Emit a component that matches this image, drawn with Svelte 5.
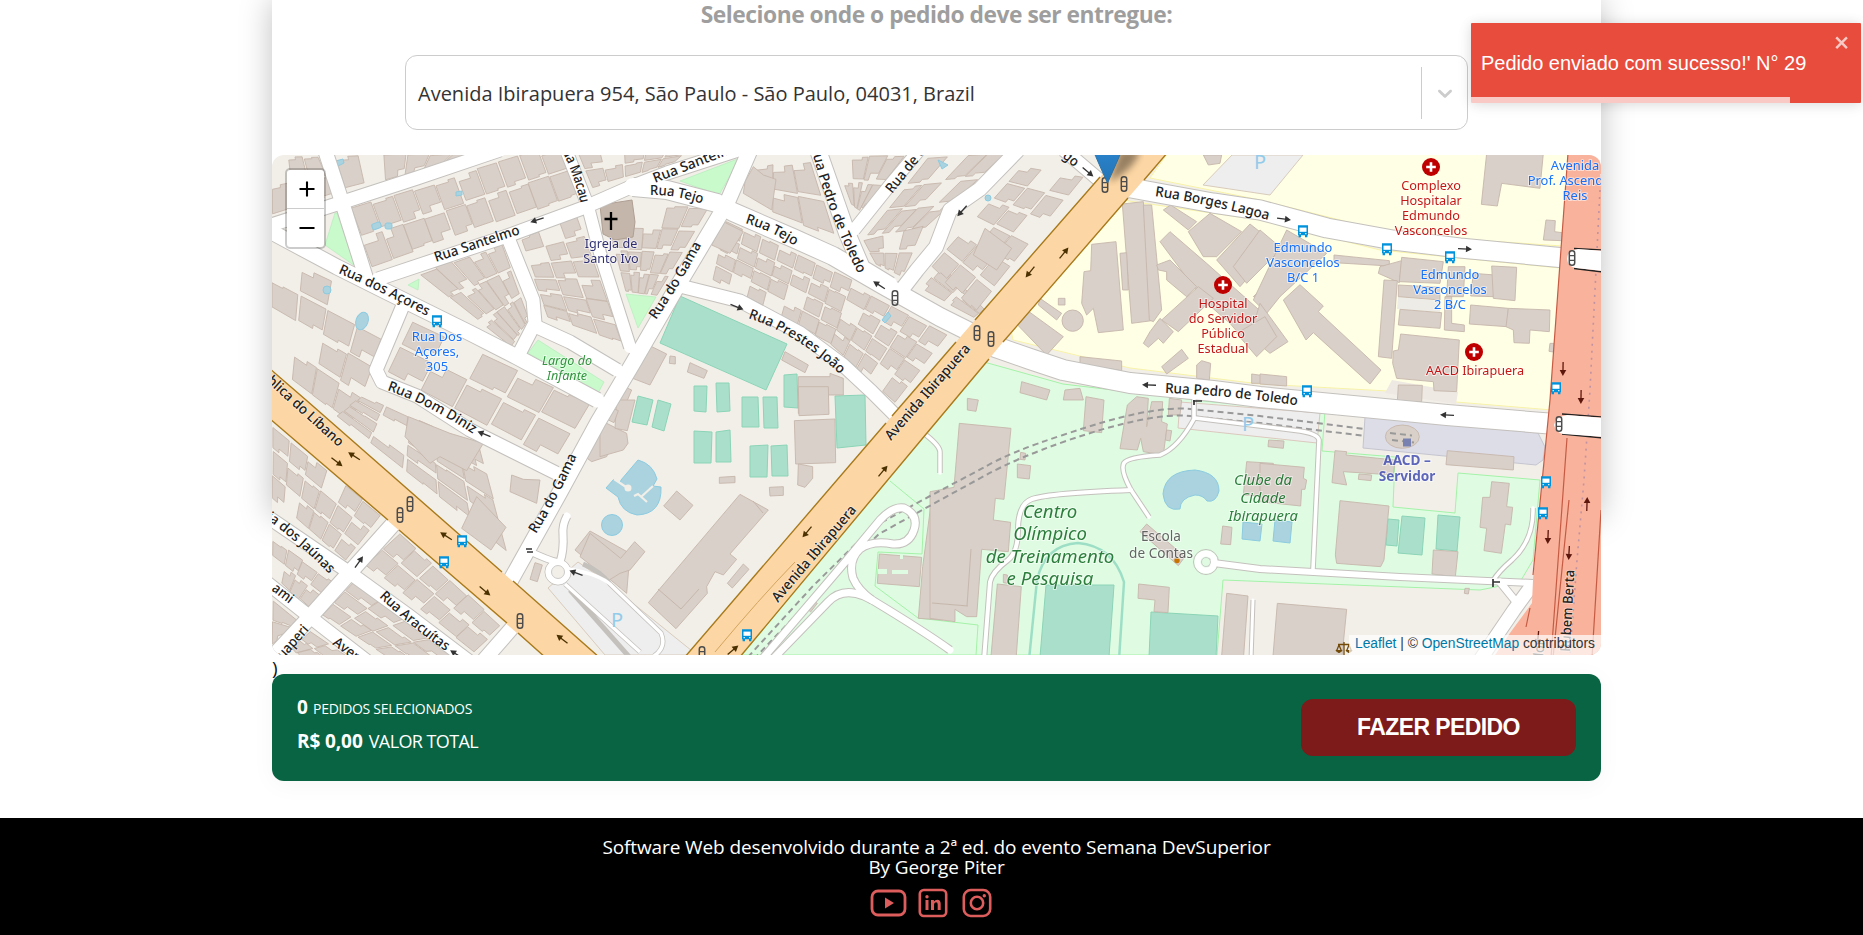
<script>
  // Deterministic noise keeps the house blocks stable between renders.
  let seed = 7;
  const rnd = () => {
    seed = (seed * 16807) % 2147483647;
    return seed / 2147483647;
  };

  // Fills a quad (four corners) with cols x rows slightly irregular houses.
  function block(q, cols, rows, skip = 0.08) {
    const [a, b, c, d] = q;
    const at = (u, v) => [
      (a[0] * (1 - u) + b[0] * u) * (1 - v) + (d[0] * (1 - u) + c[0] * u) * v,
      (a[1] * (1 - u) + b[1] * u) * (1 - v) + (d[1] * (1 - u) + c[1] * u) * v
    ];
    const out = [];
    for (let i = 0; i < cols; i++) {
      for (let j = 0; j < rows; j++) {
        if (rnd() < skip) continue;
        const j1 = rnd() * 0.08, j2 = rnd() * 0.12, j3 = rnd() * 0.08, j4 = rnd() * 0.12;
        const u0 = (i + j1) / cols, u1 = (i + 1 - j3) / cols;
        const v0 = (j + j2) / rows, v1 = (j + 1 - j4) / rows;
        const um = u0 + (u1 - u0) * (0.35 + rnd() * 0.35);
        const vm = v0 + (v1 - v0) * (0.7 + rnd() * 0.25);
        const shape = rnd() < 0.5
          ? [at(u0, v0), at(u1, v0), at(u1, vm), at(um, vm), at(um, v1), at(u0, v1)]
          : [at(um, v0), at(u1, v0), at(u1, v1), at(u0, v1), at(u0, v0 + v1 - vm), at(um, v0 + v1 - vm)];
        out.push(shape.map((p) => p.map((n) => n.toFixed(1)).join(',')).join(' '));
      }
    }
    return out;
  }

  const houses = [
    block([[272,155],[318,155],[336,195],[272,216]], 3, 2),
    block([[334,155],[480,150],[462,158],[346,192]], 6, 1),
    block([[350,207],[560,143],[579,195],[372,267]], 10, 2, 0.06),
    block([[577,152],[715,146],[690,158],[592,188]], 6, 2),
    block([[272,250],[395,308],[352,425],[272,365]], 4, 4, 0.25),
    block([[412,318],[592,402],[556,462],[386,372]], 5, 2),
    block([[362,395],[480,447],[508,552],[335,415]], 5, 4, 0.2),
    block([[418,273],[502,243],[530,322],[512,347]], 5, 3),
    block([[520,238],[577,214],[624,345],[548,318]], 3, 6),
    block([[602,205],[710,207],[656,297],[626,293]], 5, 4),
    block([[755,168],[810,158],[836,240],[740,202]], 3, 2),
    block([[832,155],[908,153],[862,212],[852,206]], 4, 2),
    block([[726,220],[852,280],[832,345],[712,280]], 7, 4, 0.12),
    block([[852,285],[948,335],[895,403],[830,345]], 5, 4, 0.08),
    block([[928,158],[1008,152],[925,228],[866,236]], 4, 3, 0.12),
    block([[862,240],[925,224],[902,278],[876,264]], 3, 2),
    block([[918,288],[940,262],[985,310],[975,318]], 2, 2),
    block([[1022,165],[1085,175],[975,312],[930,268]], 3, 6, 0.25),
    block([[272,425],[382,515],[345,562],[272,498]], 6, 3),
    block([[272,538],[334,582],[308,608],[272,575]], 4, 2),
    block([[400,532],[502,626],[474,652],[364,565]], 6, 2, 0.12),
    block([[356,580],[458,658],[390,660],[322,615]], 4, 3),
    block([[310,630],[352,658],[300,658],[292,648]], 2, 2),
    block([[272,598],[298,620],[285,635],[272,645]], 1, 2)
  ].flat();

  const straight = [
    ['325,150 342,202 366,278', 14],
    ['268,226 337,204 417,178 500,150', 13],
    ['266,229 337,267 385,291 470,333 517,357 597,400', 15],
    ['535,326 570,342 617,370', 13],
    ['378,279 507,236 583,208 633,186 667,173 738,150', 13],
    ['633,187 667,190 717,203 733,212 793,238 833,256 883,285 940,317 970,332', 18],
    ['566,150 587,203 600,253 630,347', 12],
    ['508,238 533,300 535,323 519,354', 13],
    ['750,150 727,203 677,287 633,363 598,422 560,492 508,585', 15],
    ['404,303 376,370 382,382 417,396 470,430 556,473', 13],
    ['680,286 740,301 800,333 843,365 872,392 900,420', 13],
    ['818,150 847,233 862,268 890,285', 16],
    ['854,230 890,185 921,148', 12],
    ['1018,150 980,189 950,210 936,247 917,270 900,292', 14],
    ['1064,150 1104,184', 13],
    ['1120,186 1213,203 1260,210 1327,228 1393,240 1460,248 1565,258', 19],
    ['990,345 1030,359 1063,370 1130,383 1213,391 1260,397 1447,415 1555,424', 20],
    ['262,513 350,573 408,615 470,662', 13],
    ['395,522 310,617 268,662', 15],
    ['266,582 310,617 368,662', 13],
    ['512,628 484,660', 14],
    ['1206,562 1260,569 1400,577 1533,583', 6],
    ['1500,582 1517,603 1535,583', 7],
    ['1530,588 1514,610 1480,660', 13],
    ['1253,600 1251,660', 3]
  ].map(([p, w]) => ['M' + p.replaceAll(' ', ' L'), w]);
  const curved = [
    ['M1194,400 L1194,419 Q1178,448 1160,455 Q1128,457 1124,463 Q1120,470 1131,490 L1149,517', 3.6],
    ['M1131,490 Q1050,493 1032,499 Q1018,504 1018,530 Q1018,552 1008,560 Q992,572 990,582 L984,660', 4],
    ['M1313,569 L1319,440 Q1318,434 1300,431 L1195,418', 3.6],
    ['M1493,581 Q1498,572 1512,560 Q1534,540 1533,508', 3.6],
    ['M758,664 L846,561 L880,520 Q893,506 904,508 Q919,515 914,530 Q909,545 893,544 Q872,540 860,549 Q848,560 853,578 Q858,590 872,600 Q925,632 950,650', 7],
    ['M770,662 L828,602 Q842,587 864,596 L872,600', 7],
    ['M926,435 Q940,446 940,452 L940,473', 3.5],
    ['M529,551 Q548,560 557,562', 6],
    ['M560,562 Q564,550 563,535 Q562,525 567,516', 7]
  ];
  const roads = [...curved, ...straight];

  // Polygons per tile; coordinates are in thirds of a pixel from the tile origin.
  const tiles = [
    { o: [600, 150], b: [
      '435,95 460,50 490,75 528,88 515,180 430,130', '145,585 200,612 150,705 98,685', '210,618 226,620 226,642 208,640',
      '270,638 322,662 312,685 262,666', '555,605 625,645 615,668 545,630', '595,680 690,680 690,670 730,685 730,735 685,735 685,790 595,790',
      '370,215 430,245 390,310 335,285', '60,705 95,720 70,780 40,770']},
    { o: [930, 150], b: [
      '485,283 558,275 580,540 505,548 490,475 470,495 455,460 462,365 482,362', '577,162 640,155 665,512 605,520', '640,165 665,165 695,480 670,515 658,510',
      '570,310 590,308 595,420 578,420', '720,245 830,340 1010,500 1000,560 960,590 900,520 820,450 690,275', '700,180 722,165 800,215 775,240',
      '775,245 840,190 935,245 860,320 820,320', '860,330 960,222 1040,285 930,410', '720,330 680,345 685,360 710,365 710,390 770,440 800,410',
      '805,410 850,445 745,545 695,510', '660,545 690,505 730,545 700,580 685,565 655,592 640,580', '258,520 290,480 400,560 350,615 335,600',
      '330,445 395,490 380,510 325,465', '385,445 405,445 405,465 385,465', '450,620 575,633 575,662 450,642', '755,598 775,625 710,672 695,650',
      '800,645 815,632 842,640 838,690 800,685', '965,672 1035,682 1035,700 965,700', '275,695 360,720 350,750 270,728', '820,15 875,15 870,40 835,45',
      '165,235 245,295 200,360 130,315', '405,720 450,715 460,750 400,750', '1000,410 1030,380 1030,440 970,440'], c: [428,512,32]},
    { o: [1260, 150], b: [
      '680,10 850,10 840,115 725,100 712,168 664,163', '858,210 886,212 884,245 906,248 906,272 850,270', '0,240 65,295 -40,400 -80,350',
      '80,240 200,310 60,440 20,490 -20,450', '0,460 84,575 30,610 -30,560', '70,450 120,404 190,468 175,485 363,660 330,702 160,548 138,570',
      '222,315 388,332 388,348 222,338', '360,350 425,332 418,398 355,370', '425,322 550,335 540,400 418,395', '415,405 540,412 540,450 415,440',
      '420,478 545,488 540,535 415,525', '565,350 615,350 610,440 560,440', '555,440 575,440 575,520 613,525 613,545 553,540',
      '640,370 705,375 700,440 632,438', '695,348 770,352 765,452 700,445', '632,465 745,475 740,530 628,522', '745,475 870,480 868,545 810,540 808,580 762,578 760,540 738,530',
      '372,390 412,392 395,625 355,620', '422,552 598,570 590,725 522,722 520,695 410,685 398,640 400,603 415,600', '415,705 487,706 485,755 412,755',
      '870,580 882,580 880,606 867,604', '0,672 80,680 80,708 0,702', '-70,550 15,500 50,560 -10,620']},
    { o: [270, 400], b: [
      '725,225 760,238 810,240 800,310 720,275', '620,290 708,382 663,450 575,385', '415,50 540,100 640,130 590,212 510,170 480,190 405,110',
      '985,65 1045,90 1010,170 965,185 945,170', '960,393 1080,460 1070,580 915,450', '795,488 817,495 802,545 780,538']},
    { o: [600, 400], b: [
      '583,62 705,57 707,188 587,192', '595,-40 685,-40 687,43 597,47', '595,192 638,200 638,235 615,262 593,255', '358,232 405,229 405,248 358,250',
      '508,262 550,260 550,286 510,288', '230,273 279,316 240,360 191,318', '420,283 505,330 390,462 410,478 370,525 345,515 320,560 322,580 228,686 145,608 178,568',
      '430,492 447,508 397,564 382,550', '0,60 80,100 84,130 70,150 0,170', '50,0 105,0 82,92 45,85', '22,18 55,32 42,68 15,55',
      '-30,400 62,475 104,425 135,455 90,510 60,520 28,540 -60,470', '838,462 965,472 958,560 832,550', '998,275 1030,275 1030,660 955,655 968,500', '635,597 652,610 632,636 618,622']},
    { o: [930, 400], b: [
      '88,70 243,85 222,298 196,295 190,360 242,367 235,455 155,448 140,650 110,650 75,628 75,665 0,655 0,275 72,262', '468,-10 522,0 515,98 460,92',
      '592,15 620,-10 655,-5 650,80 665,5 698,5 695,65 712,72 700,165 640,155 632,115 622,150 570,146', '718,-5 755,0 750,45 715,45', '710,90 725,92 720,123 706,120',
      '262,192 302,197 298,237 262,233', '272,157 287,160 285,180 270,178', '950,185 1030,190 1030,290 940,285', '650,372 765,470 745,497 630,395',
      '202,552 274,560 258,780 182,780', '626,552 718,562 714,638 672,635 675,600 624,595', '890,580 954,588 940,780 874,780', '878,378 906,382 902,434 872,432',
      '112,-5 145,0 138,34 112,30', '220,523 232,525 232,550 220,548']},
    { o: [1260, 400], b: [
      '0,190 133,202 130,235 140,240 135,268 125,268 122,318 0,305', '225,152 260,155 258,165 405,180 400,225 250,215 260,255 216,248', '562,152 762,170 760,210 558,194',
      '240,302 387,318 372,480 362,500 230,490 226,465', '520,450 594,455 586,530 516,522', '695,245 748,250 740,320 758,322 752,375 736,372 724,460 672,452 680,385 660,382 668,292 690,292',
      '52,610 260,628 245,780 38,780', '26,120 72,123 70,145 24,140', '615,565 628,565 625,582 613,580', '297,222 335,225 333,242 295,238'], e: [427,110,51,35]}
  ];

  const pitches = [
    '680,296 787,344 766,390 660,343', '638,396 653,400 647,425 632,422', '658,400 671,404 664,431 652,427',
    '694,386 707,386 706,412 694,411', '716,383 729,383 730,411 717,412', '742,397 758,397 759,427 742,427', '763,397 777,397 778,428 764,428',
    '784,375 797,374 798,408 784,407', '835,396 865,395 866,445 837,448', '694,431 712,432 711,463 694,463', '716,432 730,430 731,462 716,462',
    '750,446 768,445 767,477 750,477', '771,446 787,445 788,476 772,476', '1046,585 1114,585 1109,657 1040,657', '1151,612 1218,616 1216,657 1149,657',
    '1402,516 1425,518 1422,555 1398,553', '1388,519 1399,520 1397,546 1386,545', '1438,515 1460,517 1457,551 1436,549'
  ];
  const greens = ['335,213 325,245 355,266 337,213', '680,181 740,158 719,195', '626,294 656,297 638,328', '538,340 604,382 598,393 528,353', '408,285 419,279 418,290', '840,255 843,252 848,260'];
  const pools = ['336,161 343,159 344,163 338,166', '456,192 462,191 462,195 456,196', '882,320 888,312 891,316 885,323', '938,160 948,165 942,169', '1243,522 1262,524 1260,541 1242,539', '1275,520 1292,522 1290,543 1273,541'];

  const buses = [[437,321],[1303,231],[1387,249],[1450,257],[1307,391],[1556,388],[462,541],[444,562],[747,635],[1546,482],[1543,513]];
  const lights = [[895,298],[1105,185],[1124,184],[977,333],[991,339],[410,504],[400,515],[520,621],[1572,258],[1559,424],[702,654]];
  // x, y, heading in degrees, colour
  const arrows = [
    [537,220,162,'#333'],[737,307,22,'#333'],[879,285,213,'#333'],[1088,172,40,'#333'],[962,211,132,'#333'],[1064,253,-51,'#4b3100'],[1030,272,129,'#4b3100'],
    [1149,385,182,'#333'],[1284,219,8,'#333'],[1465,249,3,'#333'],[1447,415,183,'#333'],[1563,369,91,'#5e170c'],[1581,397,91,'#5e170c'],[354,456,213,'#4b3100'],[337,462,38,'#4b3100'],
    [484,434,202,'#333'],[359,562,-55,'#333'],[446,536,213,'#4b3100'],[485,591,40,'#4b3100'],[562,639,218,'#4b3100'],[576,573,200,'#333'],
    [883,471,-50,'#4b3100'],[807,532,130,'#4b3100'],[733,650,-40,'#4b3100'],[1548,537,92,'#5e170c'],[1587,504,-88,'#5e170c'],[1569,553,93,'#5e170c'],[1538,638,95,'#5e170c'],[456,654,213,'#333']
  ];

  const streets = [
    ['Rua Santelmo', 'M436,262 L526,232', 89], ['Rua Santelm', 'M655,183 L740,150', 84], ['Rua Tejo', 'M650,195 Q676,194 708,206', 53], ['Rua Tejo', 'M745,223 Q772,231 798,248', 55],
    ['ua Macau', 'M562,152 Q574,172 583,214', 55], ['Rua Pedro de Toledo', 'M811,147 Q827,215 866,289', 136], ['Rua de C', 'M892,194 L934,142', 55], ['go', 'M1062,157 L1080,172', 16],
    ['Rua dos Açores', 'M338,273 Q385,293 432,319', 99], ['Rua do Gama', 'M656,320 Q680,285 704,240', 88], ['Rua Prestes João', 'M748,318 Q800,335 846,380', 109],
    ['Rua Dom Diniz', 'M387,390 Q430,405 478,437', 97], ['Rua do Gama', 'M536,534 Q559,497 579,451', 88], ['ública do Líbano', 'M260,376 L346,454', 106],
    ['ia dos Jaúnas', 'M266,519 Q300,543 334,579', 84], ['Rua Aracuítas', 'M379,597 Q412,628 451,655', 86], ['ami', 'M271,590 L299,611', 23], ['uaperi', 'M283,660 L318,620', 40], ['Aven', 'M332,644 L364,668', 32],
    ['Avenida Ibirapuera', 'M891,441 L978,341', 122], ['Avenida Ibirapuera', 'M778,603 L864,502', 122],
    ['Rua Borges Lagoa', 'M1155,196 Q1210,204 1280,223', 116], ['Rua Pedro de Toledo', 'M1165,393 Q1230,395 1308,407', 133], ['Rubem Berta', 'M1570,652 L1575,560', 82], ['Senador', 'M1540,690 L1545,637', 50]
  ];
  const pois = [
    { c: '#0066ff', s: 13, l: 15, x: 437, y: 341, t: ['Rua Dos', 'Açores,', '305'] },
    { c: '#0066ff', s: 12.9, l: 15, x: 1303, y: 252, t: ['Edmundo', 'Vasconcelos', 'B/C 1'] },
    { c: '#0066ff', s: 12.9, l: 15, x: 1450, y: 279, t: ['Edmundo', 'Vasconcelos', '2 B/C'] },
    { c: '#0066ff', s: 12.9, l: 15, x: 1575, y: 170, t: ['Avenida', 'Prof. Ascendino', 'Reis'] },
    { c: '#bf0000', s: 12.7, l: 15, x: 1431, y: 190, t: ['Complexo', 'Hospitalar', 'Edmundo', 'Vasconcelos'] },
    { c: '#bf0000', s: 12.7, l: 15, x: 1223, y: 308, t: ['Hospital', 'do Servidor', 'Público', 'Estadual'] },
    { c: '#bf0000', s: 12.6, l: 15, x: 1475, y: 374.5, t: ['AACD Ibirapuera'] },
    { c: '#1a1a66', s: 12.6, l: 15, x: 611, y: 248, t: ['Igreja de', 'Santo Ivo'] },
    { c: '#1f8a2d', s: 12.6, l: 15, x: 567, y: 365, i: true, t: ['Largo do', 'Infante'] },
    { c: '#19702b', s: 18.6, l: 22.4, x: 1050, y: 518, i: true, t: ['Centro', 'Olímpico', 'de Treinamento', 'e Pesquisa'] },
    { c: '#19702b', s: 14.8, l: 17.8, x: 1263, y: 485, i: true, t: ['Clube da', 'Cidade', 'Ibirapuera'] },
    { c: '#555', s: 13.6, l: 16.5, x: 1161, y: 541, t: ['Escola', 'de Contas'] },
    { c: '#4d58b5', s: 13.6, l: 16.2, x: 1407, y: 465, w: 700, t: ['AACD –', 'Servidor'] }
  ];
</script>

<div class="page">
  <main>
    <section class="card">
      <h3>Selecione onde o pedido deve ser entregue:</h3>
      <div class="select">
        <span class="value">Avenida Ibirapuera 954, São Paulo - São Paulo, 04031, Brazil</span>
        <span class="separator"></span>
        <span class="indicator">
          <svg width="24" height="24" viewBox="0 0 20 20"><path d="M4.516 7.548c0.436-0.446 1.043-0.481 1.576 0l3.908 3.747 3.908-3.747c0.533-0.481 1.141-0.446 1.574 0 0.436 0.445 0.408 1.197 0 1.615-0.406 0.418-4.695 4.502-4.695 4.502-0.217 0.223-0.502 0.335-0.787 0.335s-0.57-0.112-0.789-0.335c0 0-4.287-4.084-4.695-4.502s-0.436-1.17 0-1.615z" fill="#ccc" /></svg>
        </span>
      </div>

      <div class="map">
        <svg width="1329" height="500" viewBox="272 155 1329 500">
          <rect x="272" y="155" width="1329" height="500" fill="#f2efe9" />
          <g fill="#ffffe5" stroke="#f8f3a8" stroke-width="1">
            <polygon points="1150,178 1170,150 1570,150 1562,246 1400,235 1260,200" />
            <polygon points="1122,200 1260,220 1380,250 1560,268 1552,410 1456,402 1388,391 1260,384 1130,368 1013,340 1010,325" />
          </g>
          <polygon points="1203,185 1232,155 1303,155 1270,195" fill="#eee" stroke="#d8cbbb" />
          <polygon points="1398,297 1441,301 1440,312 1397,309" fill="#eeece6" />
          <polygon points="1392,380 1458,392 1456,404 1385,393" fill="#eee9e2" />
          <polygon points="984,362 1063,384 1213,402 1325,411 1322,451 1395,457 1393,507 1455,513 1458,473 1540,480 1533,560 1520,582 1480,590 1223,580 1217,655 742,655" fill="#dffce2" stroke="#a4f2a8" />
          <path d="M890,481 L924,509 L922,554 L878,552 L875,586 L918,618 L978,625 L976,655" fill="none" stroke="#a4f2a8" />
          <polygon points="1180,402 1320,413 1317,443 1178,428" fill="#eee" stroke="#dbc8bd" />
          <polygon points="1365,417 1538,433 1545,447 1543,460 1536,465 1363,448" fill="#dddde8" stroke="#c5c5cf" />
          <polygon points="548,588 578,562 604,580 697,655 605,655" fill="#eee" stroke="#d8cbbb" />

          <g class="building">{#each houses as h}<polygon points={h} />{/each}</g>
          <g fill="#c8facc" stroke="#b5edba" stroke-width=".7">{#each greens as g}<polygon points={g} />{/each}</g>
          <path d="M1029,660 L1037,580 Q1045,545 1078,543 Q1113,546 1124,582 L1119,660" fill="none" stroke="#9ddfc6" stroke-width="2.5" />
          <g fill="#aae0cb" stroke="#8bd4b7" stroke-width="1">{#each pitches as p}<polygon points={p} />{/each}</g>

          {#each tiles as t}
            <g class="building big" transform={`translate(${t.o[0]} ${t.o[1]}) scale(.33333)`}>
              {#each t.b as p}<polygon points={p} />{/each}
              {#if t.c}<circle cx={t.c[0]} cy={t.c[1]} r={t.c[2]} />{/if}
              {#if t.e}<ellipse cx={t.e[0]} cy={t.e[1]} rx={t.e[2]} ry={t.e[3]} />{/if}
            </g>
          {/each}
          <polygon points="600,205 632,200 635,222 633,237 615,240 603,234" fill="#c4b6ab" stroke="#af9f93" />
          <path d="M878,569 h9 v5 h-9 z M892,570 h16 v4 h-16 z M900,555 h3 v4 h-3 z" fill="#dffce2" />
          <path d="M658,589 l23,20 18,-20 M753,501 l10,12 M971,549 l-4,57 M932,603 l36,3" fill="none" stroke="#c6b7ac" />

          <g fill="#aad3df" stroke="#8ccbe0" stroke-width="1">
            {#each pools as p}<polygon points={p} />{/each}
            <rect x="372" y="223" width="9" height="6" rx="2" transform="rotate(-20 376 226)" /><rect x="385" y="223" width="7" height="6" rx="2" />
            <ellipse cx="362" cy="321" rx="6" ry="9" transform="rotate(20 362 321)" /><circle cx="327" cy="290" r="4" /><circle cx="988" cy="198" r="3" />
            <path d="M621,480 L638,460 Q653,464 657,479 L653,486 L661,487 Q662,514 637,515 Q621,512 618,497 L606,488 L614,479 L620,484 Z" />
            <circle cx="612" cy="525" r="10.5" />
            <path d="M1163,494 Q1165,471 1195,470 Q1219,473 1219,491 Q1216,503 1207,501 Q1203,495 1195,495 Q1180,498 1180,509 Q1165,512 1163,494 Z" />
          </g>
          <path d="M614,479 l12,8 M634,496 l4,-2 9,8 M641,497 l12,-11" fill="none" stroke="#f2efe9" stroke-width="2.200" /><circle cx="628" cy="488" r="3.500" fill="#f2efe9" />

          <g fill="none" stroke="#999" stroke-width="2" stroke-dasharray="6 4">
            <path d="M748,657 L813,586 L873,527 L930,496 L983,468 Q1010,452 1063,435 Q1150,405 1190,409 L1260,416 L1365,429" />
            <path d="M754,659 L819,591 L879,534 L933,504 L986,475 Q1015,459 1066,441 Q1150,412 1190,416 L1260,423 L1365,436" />
          </g>

          <g class="casing">{#each roads as r}<path d={r[0]} stroke-width={r[1] + 2} />{/each}<circle cx="558" cy="572" r="13" /><circle cx="1206" cy="562" r="12.500" /></g>
          <path d="M583,564 Q600,571 610,584 L661,633 Q667,647 654,656 M565,584 L640,652 M570,590 L632,660" fill="none" stroke="#c4c1bd" stroke-width="5" />
          <g class="fill">{#each roads as r}<path d={r[0]} stroke-width={r[1]} />{/each}</g>
          <path d="M565,568 L583,572 Q600,576 610,584 L661,633 Q667,647 654,656 M565,584 L640,652" fill="none" stroke="#fff" stroke-width="3.500" />
          <g fill="none" stroke="#fff" stroke-width="6"><circle cx="558" cy="572" r="9.500" /><circle cx="1206" cy="562" r="8.500" /></g>
          <circle cx="558" cy="572" r="6.500" fill="#f2efe9" stroke="#ccc" /><circle cx="1206" cy="562" r="4.500" fill="#dffce2" stroke="#ccc" />

          <path d="M255,356 L306,400 L600,658 L546,658 L510,627 L387,520 L262,412 Z" fill="#fcd6a4" />
          <path d="M255,356 L306,400 L502,572 M513,581 L600,658 M262,412 L388,520 M399,530 L507,623 M518,633 L546,658" stroke="#a87a1b" stroke-width="1.400" fill="none" />
          <path d="M1121,153 L1102,175 L975,320 L930,372 L684,658 L739,658 L927,433 L955,400 L1003,342 L1167,153 Z" fill="#fcd6a4" />
          <path d="M1100,177 L975,320 M956,342 L892,416 M886,423 L684,658 M739,658 L927,433 L989,359 M1003,342 L1128,198 M1144,180 L1168,152" stroke="#a87a1b" stroke-width="1.400" fill="none" />
          <path d="M715,652 Q760,598 795,562" stroke="#d2a55f" fill="none" />
          <path d="M1568,153 L1550,400 L1533,580 L1532,603 L1510,633 L1493,658 L1602,658 L1602,153 Z" fill="#f9b29c" />
          <path d="M1568,153 L1550,400 L1533,575 M1567,438 L1551,658 M1553,658 L1569,500 M1601,510 L1592,658 M1530,608 L1526,627" stroke="#c65b43" stroke-width="1.200" fill="none" />
          <path d="M1600,190 L1590,390 L1584,480 L1577,560 L1570,655" stroke="#c193a0" stroke-width="1.600" stroke-dasharray="2 5" fill="none" />
          <path d="M1574,248.500 L1603,250 M1574,268.500 L1603,272 M1562,414 L1603,417 M1562,434 L1603,438" stroke="#222" stroke-width="1.400" />
          <path d="M1603,251 L1578,249 Q1567,251 1567,259 Q1568,267 1576,268 L1603,271 Z M1603,418 L1567,415 Q1555,417 1554,425 Q1556,433 1563,434 L1603,437 Z" fill="#fff" />

          {#each arrows as a}
            <g transform={`translate(${a[0]} ${a[1]}) rotate(${a[2]})`} fill={a[3]}><rect x="-7" y="-.65" width="10" height="1.3" /><path d="M1,-3.300 L7,0 L1,3.300 Z" /></g>
          {/each}
          {#each lights as l}
            <g transform={`translate(${l[0]} ${l[1]})`} fill="none" stroke="#4d4d4d"><rect x="-2.700" y="-7.300" width="5.400" height="14.600" rx="2.500" stroke-width="1.500" /><path d="M-2.700,-2.400 h5.400 M-2.700,2.400 h5.400" stroke-width="1.300" /></g>
          {/each}
          {#each buses as b}
            <g transform={`translate(${b[0]} ${b[1]})`}><path d="M-5,-5.800 h10 v10 h-.6 v2 h-2.400 v-2 h-4 v2 h-2.400 v-2 h-.6 z" fill="#0092da" /><rect x="-3.500" y="-3.400" width="7" height="4.200" fill="#fff" /><path d="M-3.500,2.700 h1.500 M2,2.700 h1.500" stroke="#fff" /></g>
          {/each}

          <g class="street">
            {#each streets as s, n}
              <path id={`st${n}`} d={s[1]} fill="none" stroke="none" />
              <text textLength={s[2]} lengthAdjust="spacingAndGlyphs"><textPath href={`#st${n}`}>{s[0]}</textPath></text>
            {/each}
          </g>

          {#each [[1431,167],[1223,285],[1474,352]] as h}
            <g transform={`translate(${h[0]} ${h[1]})`}><circle r="9" fill="#bf0000" /><path d="M-4.800,0 h9.600 M0,-4.800 v9.600" stroke="#fff" stroke-width="2.600" /></g>
          {/each}
          <path d="M611,212 v18 M604.500,219 h13" stroke="#000" stroke-width="2.300" />
          <path d="M1390,433 l22,2.500 M1392,440 l22,2.500" stroke="#999" stroke-width="2" stroke-dasharray="6 4" />
          <rect x="1403" y="438.500" width="8" height="8" fill="#7981b0" /><circle cx="1177" cy="560.500" r="2.700" fill="#c77400" />
          <g class="parking"><text x="1260" y="169">P</text><text x="617" y="627">P</text><text x="1248" y="431">P</text></g>
          <path d="M1193,401 h9 M1194,400 v5 M1493,579 v8 M1493,582 h7 M526,549 h6 M527,552 h6" stroke="#333" stroke-width="1.700" />

          {#each pois as p}
            <text class="poi" fill={p.c} font-size={p.s} font-style={p.i ? 'italic' : 'normal'} font-weight={p.w ?? 400}>
              {#each p.t as line, k}<tspan x={p.x} y={p.y + k * p.l}>{line}</tspan>{/each}
            </text>
          {/each}
          <g transform="translate(1344 649)" stroke="#734a08" fill="#734a08"><path d="M-6,-4.500 h12 M0,-7 v14 M-5,-4 l-2.500,6 M-5,-4 l2.500,6 M5,-4 l-2.500,6 M5,-4 l2.500,6" fill="none" stroke-width="1.300" /><path d="M-8,1.500 h6 q-3,4 -6,0 M2,1.500 h6 q-3,4 -6,0" /></g>

          <defs>
            <linearGradient id="pin" x2="0" y2="1"><stop offset="0" stop-color="#2a83cb" /><stop offset="1" stop-color="#2474b5" /></linearGradient>
            <filter id="soft"><feGaussianBlur stdDeviation="3.500" /></filter>
          </defs>
          <path d="M1109,182 L1120,150 L1140,150 Q1136,168 1109,182" fill="#000" opacity=".4" filter="url(#soft)" />
          <path d="M1093,150 Q1098,162 1107.500,183 Q1117,162 1122,150 Z" fill="url(#pin)" stroke="#2b72a8" />
        </svg>
        <div class="zoom">
          <button aria-label="Zoom in"><svg width="16" height="16" viewBox="0 0 16 16"><path d="M0.500,8 h15 M8,0.500 v15" stroke="#000" stroke-width="2.100" /></svg></button>
          <button aria-label="Zoom out"><svg width="16" height="16" viewBox="0 0 16 16"><path d="M0.500,8 h15" stroke="#000" stroke-width="2.100" /></svg></button>
        </div>
        <div class="credit"><a href="#leaflet">Leaflet</a> | © <a href="#osm">OpenStreetMap</a> contributors</div>
      </div>
      <div class="stray">)</div>
    </section>

    <section class="summary">
      <div class="totals">
        <div class="line small"><strong>0</strong> PEDIDOS SELECIONADOS</div>
        <div class="line"><strong>R$ 0,00</strong> VALOR TOTAL</div>
      </div>
      <button class="order">FAZER PEDIDO</button>
    </section>
  </main>

  <footer>
    <p>Software Web desenvolvido durante a 2ª ed. do evento Semana DevSuperior<br />By George Piter</p>
    <div class="social">
      <svg width="37" height="30" viewBox="0 0 37 30"><rect x="2" y="3" width="33" height="24" rx="6" fill="none" stroke="#dd5c5c" stroke-width="2.800" /><path d="M15,9.500 L24,15 L15,20.500 Z" fill="#dd5c5c" /></svg>
      <svg width="30" height="30" viewBox="0 0 30 30"><rect x="1.800" y="2" width="26.400" height="26" rx="4" fill="none" stroke="#dd5c5c" stroke-width="2.600" /><path d="M7.500,12 h3 v10 h-3 z M13,12 h2.900 v1.500 q1.300,-1.800 3.300,-1.800 q3.500,0 3.500,4.300 v6 h-3 v-5.400 q0,-2.400 -1.700,-2.400 q-2,0 -2,2.500 v5.300 h-3 z" fill="#dd5c5c" /><circle cx="9" cy="8.800" r="1.700" fill="#dd5c5c" /></svg>
      <svg width="30" height="30" viewBox="0 0 30 30"><rect x="1.800" y="2" width="26.400" height="26" rx="7" fill="none" stroke="#dd5c5c" stroke-width="2.600" /><circle cx="15" cy="15" r="6.200" fill="none" stroke="#dd5c5c" stroke-width="2.600" /><circle cx="22.300" cy="7.800" r="1.700" fill="#dd5c5c" /></svg>
    </div>
  </footer>
</div>

<aside class="toast">
  <span>Pedido enviado com sucesso!' N° 29</span>
  <svg class="close" width="17" height="19" viewBox="0 0 14 16"><path fill="#fff" fill-rule="evenodd" d="M7.710 8.230l3.750 3.750-1.480 1.480-3.750-3.750-3.750 3.750L1 11.980l3.750-3.750L1 4.480 2.480 3l3.750 3.750L9.980 3l1.480 1.480-3.750 3.750z" /></svg>
  <i class="progress"></i>
</aside>

<style>
  :global(body) { margin: 0; overflow: hidden; background: #fff; }
  .page { width: 1873px; height: 935px; overflow: hidden; display: flex; flex-direction: column; font-family: 'Open Sans', 'Noto Sans', sans-serif; }
  main { width: 1329px; height: 818px; margin: 0 auto; flex: none; }
  .card { height: 517px; background: #fff; box-shadow: 0 0 30px rgba(0, 0, 0, .25); display: flex; flex-direction: column; align-items: center; }
  h3 { margin: 0; height: 55px; line-height: 30px; font-size: 22.8px; font-weight: 700; color: #9e9e9e; letter-spacing: -.48px; white-space: nowrap; flex: none; }
  .select { box-sizing: border-box; width: 1063px; height: 75px; flex: none; border: 1px solid #ccc; border-radius: 12px; display: flex; align-items: center; background: #fff; }
  .value { flex: 1; padding: 2px 0 0 12px; font-size: 20px; color: #333; white-space: nowrap; }
  .separator { width: 1px; height: 52px; background: #ccc; }
  .indicator { width: 45px; display: flex; justify-content: center; }
  .map { position: relative; flex: none; width: 1329px; height: 500px; margin-top: 25px; border-radius: 12px; overflow: hidden; }
  .map > svg { display: block; }
  .building { fill: #d9d0c9; stroke: #c6b7ac; stroke-width: .9; }
  .big { stroke-width: 2.7; }
  .casing, .fill { fill: none; stroke-linejoin: round; }
  .casing { stroke: #c4c1bd; }
  .fill { stroke: #fff; stroke-linecap: round; }
  .street text { font: 500 14px 'Noto Sans', sans-serif; fill: #222; stroke: #fff; stroke-opacity: .5; stroke-width: 1.5px; paint-order: stroke; }
  .poi { font-family: 'Noto Sans', sans-serif; text-anchor: middle; stroke: #fff; stroke-opacity: .6; stroke-width: 2px; paint-order: stroke; opacity: .9; }
  .parking text { font: 20px 'Noto Sans', sans-serif; fill: #93cbea; text-anchor: middle; }
  .zoom { position: absolute; left: 13px; top: 13px; width: 37px; height: 77px; border: 2px solid rgba(0, 0, 0, .2); border-radius: 5px; background: #fff; background-clip: padding-box; display: flex; flex-direction: column; }
  .zoom button { height: 38px; border: 0; padding: 0 0 0 2px; background: none; display: flex; align-items: center; justify-content: center; }
  .zoom button:first-child { height: 39px; border-bottom: 1px solid #ccc; }
  .credit { position: absolute; right: 0; bottom: 0; height: 20px; padding: 0 6px; background: rgba(255, 255, 255, .7); font: 13.8px/18px 'Liberation Sans', sans-serif; color: #333; white-space: nowrap; }
  .credit a { color: #0078a8; text-decoration: none; }
  .stray { align-self: flex-start; margin-top: -2px; font-size: 19px; line-height: 30px; color: #111; flex: none; }
  .summary { position: relative; box-sizing: border-box; height: 107px; margin-top: 157px; padding: 0 25px; border-radius: 12px; background: #086443; box-shadow: 0 4px 24px rgba(0, 0, 0, .04); display: flex; align-items: center; justify-content: space-between; color: #fff; }
  .totals { margin-bottom: 6px; }
  .line { font-size: 18px; line-height: 33px; letter-spacing: -.6px; white-space: nowrap; }
  .line strong { font-size: 19px; letter-spacing: -.1px; margin-right: 2px; }
  .small { font-size: 14px; letter-spacing: -.3px; }
  .order { width: 275px; height: 57px; margin-bottom: 1px; padding: 0; border: 0; border-radius: 12px; background: #7d1a1a; color: #fff; font: bold 23px 'Liberation Sans', sans-serif; letter-spacing: -.6px; }
  footer { flex: 1; background: #000; color: #fff; display: flex; flex-direction: column; align-items: center; }
  footer p { margin: 19px 0 9px; font-size: 19px; line-height: 20px; text-align: center; letter-spacing: -.11px; white-space: nowrap; }
  .social { display: flex; gap: 14px; margin-top: 2px; margin-right: 12px; }
  .social svg:first-child { margin-right: -3px; }
  .toast { position: absolute; left: 1471px; top: 23px; width: 390px; height: 80px; background: #e84c3d; border-radius: 1px; box-shadow: 0 1px 12px rgba(0, 0, 0, .1), 0 2px 18px rgba(0, 0, 0, .06); color: #fff; font: 20px/80px 'Liberation Sans', sans-serif; }
  .toast span { padding-left: 10px; white-space: nowrap; }
  .close { position: absolute; right: 10px; top: 10px; opacity: .7; }
  .progress { position: absolute; left: 0; bottom: 0; width: 319px; height: 6px; background: rgba(255, 255, 255, .7); }
</style>
